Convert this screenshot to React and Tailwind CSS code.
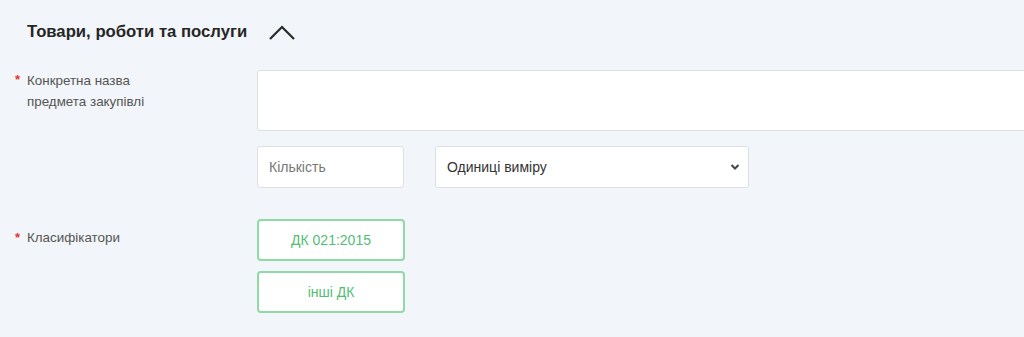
import React from "react";

export default function App() {
  return (
    <div className="w-[1024px] h-[337px] overflow-hidden bg-[#f2f5f9] font-['Liberation_Sans',Arial,sans-serif]">
      <div className="flex items-center pl-[27px] pt-[19px] h-[44px]">
        <h2 className="text-[16.7px] font-bold text-[#262626] leading-[20px]">Товари, роботи та послуги</h2>
        <svg className="ml-[21px] mt-[2px]" width="28" height="16" viewBox="0 0 28 16" fill="none">
          <path d="M2 14 L14 2 L26 14" stroke="#2a2a2a" strokeWidth="2.2" />
        </svg>
      </div>

      <div className="flex mt-[26px]">
        <div className="w-[257px] shrink-0 flex pl-[15px] pt-[0px]">
          <span className="text-[#e8322e] text-[13px] font-bold leading-[20px] w-[12px]">*</span>
          <span className="text-[13.4px] leading-[21px] text-[#555]">Конкретна назва<br />предмета закупівлі</span>
        </div>
        <div className="flex flex-col">
          <textarea className="w-[800px] h-[61px] bg-white border border-[#dcdfe4] rounded-[3px] resize-none outline-none" />
          <div className="flex gap-[31px] mt-[15px]">
            <input
              placeholder="Кількість"
              className="w-[147px] h-[42px] bg-white border border-[#dcdfe4] rounded-[3px] px-[11px] text-[14px] text-[#333] placeholder:text-[#777] outline-none"
            />
            <div className="w-[314px] h-[42px] bg-white border border-[#dcdfe4] rounded-[3px] flex items-center justify-between pl-[11px] pr-[8px]">
              <span className="text-[14px] text-[#333]">Одиниці виміру</span>
              <svg width="10" height="8" viewBox="0 0 10 8">
                <path d="M1.5 2 L5 5.5 L8.5 2" stroke="#444" strokeWidth="2" fill="none" />
              </svg>
            </div>
          </div>
        </div>
      </div>

      <div className="flex mt-[31px]">
        <div className="w-[257px] shrink-0 flex pl-[15px] pt-[9px]">
          <span className="text-[#e8322e] text-[13px] font-bold leading-[20px] w-[12px]">*</span>
          <span className="text-[13.4px] leading-[20px] text-[#555]">Класифікатори</span>
        </div>
        <div className="flex flex-col gap-[10px]">
          <button className="w-[148px] h-[42px] bg-white border-2 border-[#8fd9a5] rounded-[4px] text-[14px] text-[#52be74]">ДК 021:2015</button>
          <button className="w-[148px] h-[42px] bg-white border-2 border-[#8fd9a5] rounded-[4px] text-[14px] text-[#52be74]">інші ДК</button>
        </div>
      </div>
    </div>
  );
}
